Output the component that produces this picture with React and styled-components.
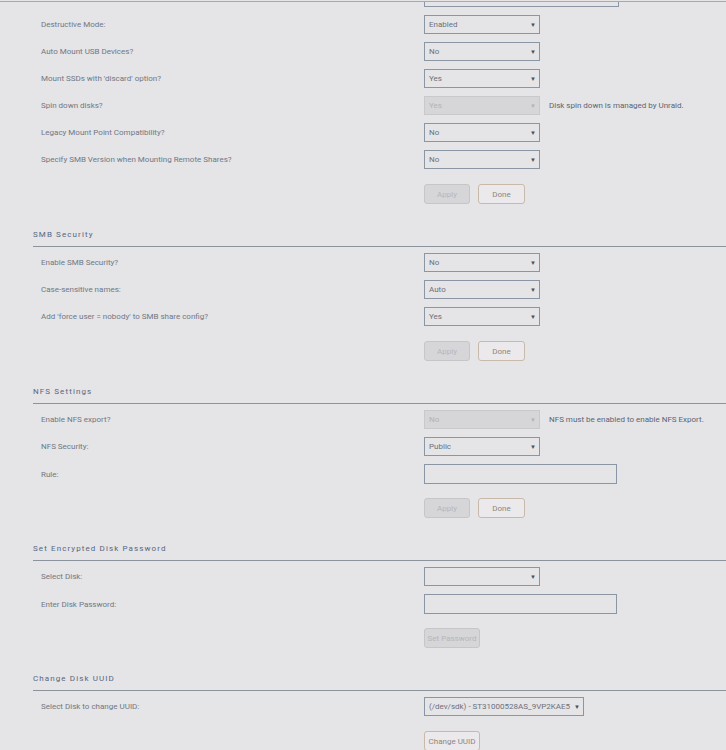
import styled, { createGlobalStyle } from "styled-components";

const GlobalStyle = createGlobalStyle`
  html, body {
    margin: 0;
    padding: 0;
    background: #e5e4e7;
  }
  body {
    font-family: Roboto, "Noto Sans", sans-serif;
    font-size: 8px;
    color: #6f7783;
  }
`;

const Page = styled.div`
  width: 726px;
  height: 750px;
  overflow: hidden;
  border-top: 1px solid #a9a9ad;
  margin-top: 1px;
  box-sizing: border-box;
`;

const TopStub = styled.div`
  margin-left: 424px;
  width: 193px;
  height: 4px;
  border: 1px solid #8a96a4;
  border-top: none;
  box-sizing: content-box;
`;

const Section = styled.section`
  padding-left: 33px;
  margin-top: ${(p) => (p.$first ? "8px" : "25px")};
`;

const Heading = styled.h3`
  margin: 0 0 6px;
  padding-bottom: 5px;
  border-bottom: 1px solid #8b939d;
  font-size: 8px;
  line-height: 12px;
  font-weight: 400;
  letter-spacing: 1.1px;
  color: #56677e;
`;

const Row = styled.div`
  display: grid;
  grid-template-columns: 383px auto;
  align-items: center;
  padding-left: 8px;
  height: 19px;
  margin-bottom: 8px;
`;

const Label = styled.div`
  color: #707884;
  line-height: 19px;
  white-space: nowrap;
`;

const Field = styled.div`
  display: flex;
  align-items: center;
  gap: 9px;
`;

const SelectBox = styled.div`
  width: ${(p) => p.$w || 116}px;
  height: 19px;
  box-sizing: border-box;
  display: flex;
  align-items: center;
  justify-content: space-between;
  padding: 0 3px 0 4px;
  border: 1px solid ${(p) => (p.$disabled ? "#c9c9cc" : "#8a96a4")};
  background: ${(p) => (p.$disabled ? "#d6d5d8" : "transparent")};
  color: ${(p) => (p.$disabled ? "#b4b3b7" : "#6b717b")};
  white-space: nowrap;
`;

const Arrow = styled.span`
  font-size: 6px;
  color: ${(p) => (p.$disabled ? "#b4b3b7" : "#4a4f57")};
`;

const TextBox = styled.div`
  width: 193px;
  height: 20px;
  box-sizing: border-box;
  border: 1px solid #8a96a4;
`;

const Hint = styled.span`
  color: #5b6574;
  white-space: nowrap;
`;

const Buttons = styled.div`
  display: flex;
  gap: 8px;
  padding-left: 391px;
  margin-top: 15px;
`;

const Button = styled.div`
  width: ${(p) => p.$w}px;
  height: 20px;
  box-sizing: border-box;
  display: flex;
  align-items: center;
  justify-content: center;
  border-radius: 3px;
  border: 1px solid ${(p) => (p.$disabled ? "#c6c6c9" : "#c8b9aa")};
  background: ${(p) => (p.$disabled ? "#d6d5d8" : "#ebe9ec")};
  color: ${(p) => (p.$disabled ? "#b6b5b9" : "#8b8782")};
  white-space: nowrap;
`;

const Select = ({ value, disabled, w }) => (
  <SelectBox $disabled={disabled} $w={w}>
    <span>{value}</span>
    <Arrow $disabled={disabled}>▼</Arrow>
  </SelectBox>
);

const ApplyDone = () => (
  <Buttons>
    <Button $disabled $w={46}>Apply</Button>
    <Button $w={47}>Done</Button>
  </Buttons>
);

export default function App() {
  return (
    <>
      <GlobalStyle />
      <Page>
        <TopStub />
        <Section $first>
          <Row>
            <Label>Destructive Mode:</Label>
            <Field><Select value="Enabled" /></Field>
          </Row>
          <Row>
            <Label>Auto Mount USB Devices?</Label>
            <Field><Select value="No" /></Field>
          </Row>
          <Row>
            <Label>Mount SSDs with 'discard' option?</Label>
            <Field><Select value="Yes" /></Field>
          </Row>
          <Row>
            <Label>Spin down disks?</Label>
            <Field>
              <Select value="Yes" disabled />
              <Hint>Disk spin down is managed by Unraid.</Hint>
            </Field>
          </Row>
          <Row>
            <Label>Legacy Mount Point Compatibility?</Label>
            <Field><Select value="No" /></Field>
          </Row>
          <Row>
            <Label>Specify SMB Version when Mounting Remote Shares?</Label>
            <Field><Select value="No" /></Field>
          </Row>
          <ApplyDone />
        </Section>

        <Section>
          <Heading>SMB Security</Heading>
          <Row>
            <Label>Enable SMB Security?</Label>
            <Field><Select value="No" /></Field>
          </Row>
          <Row>
            <Label>Case-sensitive names:</Label>
            <Field><Select value="Auto" /></Field>
          </Row>
          <Row>
            <Label>Add 'force user = nobody' to SMB share config?</Label>
            <Field><Select value="Yes" /></Field>
          </Row>
          <ApplyDone />
        </Section>

        <Section>
          <Heading>NFS Settings</Heading>
          <Row>
            <Label>Enable NFS export?</Label>
            <Field>
              <Select value="No" disabled />
              <Hint>NFS must be enabled to enable NFS Export.</Hint>
            </Field>
          </Row>
          <Row>
            <Label>NFS Security:</Label>
            <Field><Select value="Public" /></Field>
          </Row>
          <Row>
            <Label>Rule:</Label>
            <Field><TextBox /></Field>
          </Row>
          <ApplyDone />
        </Section>

        <Section>
          <Heading>Set Encrypted Disk Password</Heading>
          <Row>
            <Label>Select Disk:</Label>
            <Field><Select value="" /></Field>
          </Row>
          <Row>
            <Label>Enter Disk Password:</Label>
            <Field><TextBox /></Field>
          </Row>
          <Buttons>
            <Button $disabled $w={56}>Set Password</Button>
          </Buttons>
        </Section>

        <Section>
          <Heading>Change Disk UUID</Heading>
          <Row>
            <Label>Select Disk to change UUID:</Label>
            <Field>
              <Select w={160} value="(/dev/sdk) - ST31000528AS_9VP2KAE5" />
            </Field>
          </Row>
          <Buttons>
            <Button $w={56}>Change UUID</Button>
          </Buttons>
        </Section>
      </Page>
    </>
  );
}
